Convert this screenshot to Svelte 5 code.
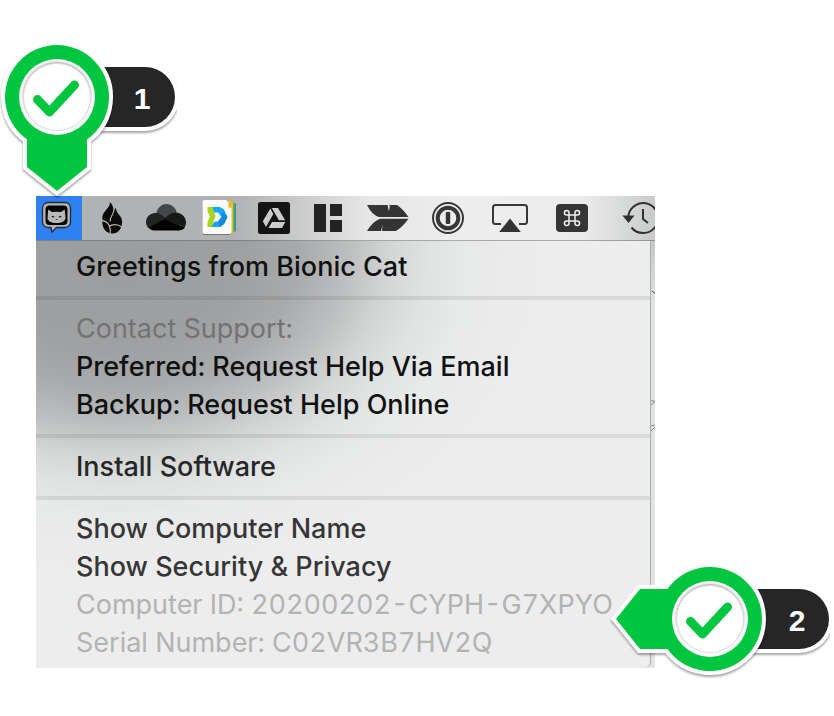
<script>
  let selected = $state('support');

  const groups = [
    [{ label: 'Greetings from Bionic Cat', tone: 'deep' }],
    [
      { label: 'Contact Support:', disabled: true, tone: 'shade' },
      { label: 'Preferred: Request Help Via Email', tone: 'deep' },
      { label: 'Backup: Request Help Online', tone: 'deep' }
    ],
    [{ label: 'Install Software', tone: 'mid' }],
    [
      { label: 'Show Computer Name' },
      { label: 'Show Security & Privacy' },
      { label: 'Computer ID: 20200202-CYPH-G7XPYO', disabled: true },
      { label: 'Serial Number: C02VR3B7HV2Q', disabled: true }
    ]
  ];

  const statusItems = [
    { id: 'support', label: 'Support', width: 46 },
    { id: 'flame', label: 'Backup', width: 32 },
    { id: 'cloud', label: 'Cloud storage', width: 40 },
    { id: 'docs', label: 'Documents', width: 36 },
    { id: 'drive', label: 'Drive', width: 40 },
    { id: 'layout', label: 'Window layout', width: 36 },
    { id: 'feather', label: 'Feather', width: 50 },
    { id: 'password', label: 'Passwords', width: 40 },
    { id: 'airplay', label: 'AirPlay', width: 52 },
    { id: 'command', label: 'Shortcuts', width: 40 },
    { id: 'clock', label: 'Time Machine', width: 52 }
  ];
</script>

{#snippet icon(id)}
  {#if id === 'support'}
    <path d="M12 6.500h17a5.500 5.500 0 0 1 5.500 5.500v14a5.500 5.500 0 0 1-5.500 5.500h-8.500l-4.500 4.500-1-4.500h-3a5.500 5.500 0 0 1-5.500-5.500V12A5.500 5.500 0 0 1 12 6.500z" fill="#b4b4b4" stroke="#252a33" stroke-width="1.300" />
    <rect x="9.500" y="9.500" width="22" height="19.500" rx="4" fill="#060606" />
    <path d="M12.300 13.500l3.700 2.500q4.500-.7 9 0l3.700-2.500.8 8.500c0 3-4 5-9 5s-9-2-9-5z" fill="#b8b8b8" />
    <path d="M15.800 20.300l2.400.7M25.200 20.300l-2.400.7" stroke="#111" stroke-width="1.300" />
    <path d="M19.700 23.500h1.600" stroke="#333" stroke-width="1" />
  {:else if id === 'flame'}
    <path d="M11.800 6c1 5.500-7.500 9.500-7.500 15.500 0 2 .9 2.900.9 3.700-.4-.2-.9-.2-1-.2 0 7.500 3.900 12.500 10.100 12.500 6 0 9.500-5 9.800-11.300.2-6.700-5.500-7.500-6.300-14.200-1 .7-1.700 1.700-2 3C15.300 11.500 14.500 8 11.800 6z" fill="#0a0a0a" />
    <path d="M16 13.500c0 5-4.500 7-3.700 12M3.500 25c5.500-.4 9.300 3.800 8.800 12.500M11.500 30.500c2.500-2.500 8-2.500 12.500.5" fill="none" stroke="#b1b2b3" stroke-width="1.200" />
  {:else if id === 'cloud'}
    <path d="M10 18.500C11 12.300 15 8 20.300 8c5 0 9.200 3.500 10.500 8.500L20 25z" fill="#464748" />
    <path d="M8 17.200c5-.6 7.500 1.600 11.500 4.800L26 26 3 32.500C1 30.800 0 28.700 0 26c0-4.700 3.500-8.300 8-8.800z" fill="#222324" />
    <path d="M18 23.500c4-5 8.500-7.500 13-6.800 5 .5 9 4.600 9 9.500 0 2-.5 3.500-1.500 5z" fill="#171818" />
    <path d="M3 31.700L18 23l21 8.500c-1.500 2-4 2.900-6.500 2.900H8c-2 0-3.900-.7-5-2.700z" fill="#020202" />
  {:else if id === 'docs'}
    <path d="M28 7h4.500q1.500 0 1.500 1.500V34q0 1.500-1.500 1.500H28z" fill="#2b91b4" />
    <path d="M27 6h3.500q2 0 2 2v27q0 1.500-2 1.500H27z" fill="#63b548" />
    <path d="M25 5h4q2 0 2 2v29q0 1.500-2 1.500h-4z" fill="#f5b72c" />
    <path d="M1 38.500h27l1-1" stroke="#77787a" fill="none" />
    <path d="M2 4h22l2.500 2.500V12l3-.5V36q0 2-2 2H3q-2.300 0-2.300-2V5q0-1 1.300-1z" fill="#fcfcfc" />
    <path d="M10 11h8l4 2.500 3.500 7.500-3.500 7-4 3H8.500l4-5.500H16l3.500-4.500-3.500-4.500h-4z" fill="#16a9ee" />
    <path d="M20 16l5.500 5-3.500 7-4 3-2-5.500 3.500-4.500z" fill="#1689e2" />
    <path d="M5.500 11H10l3.500 9L9.500 31H5.500V26l2.500-5.500-2.500-5z" fill="#a6d51b" />
  {:else if id === 'drive'}
    <rect x="4" y="6" width="32" height="32" rx="2.500" fill="#141414" />
    <path d="M16.300 12.500l3 5.500-7.300 13-3.200-5.700zM17.800 12h6.200l7.200 12.200h-6.300zM18 26h13.300l-3.300 6H14.500z" fill="#cbcbcb" />
  {:else if id === 'layout'}
    <path d="M4 8h12v28H4zM20 8h12v12H20zM20 24h12v12H20z" fill="#232323" />
  {:else if id === 'feather'}
    <path d="M5 9h20.500l1.500 6.500.8-5L27.300 9H35q6 4 11.500 12H17Q10 19 5 9zM5 35h14l1.500-6-.5 6h14q7-4.500 12.500-12.300H18Q11 25 5 35z" fill="#343434" />
  {:else if id === 'password'}
    <circle cx="20" cy="22" r="15" fill="none" stroke="#373737" stroke-width="2" />
    <circle cx="20" cy="22" r="10.300" fill="none" stroke="#373737" stroke-width="4" />
    <rect x="17.800" y="16" width="4.400" height="12" rx="1" fill="#333" />
  {:else if id === 'airplay'}
    <path d="M17 28h-5.500q-2.500 0-2.500-2.500v-14Q9 9 11.500 9h29Q43 9 43 11.500v14q0 2.500-2.500 2.500H35" fill="none" stroke="#373737" stroke-width="2" />
    <path d="M26 22.500L36.800 36H15.200z" fill="#343434" />
  {:else if id === 'command'}
    <rect x="4" y="8" width="32" height="28" rx="4" fill="#353535" />
    <path d="M17 19h6v6h-6zM17 19v-2.300a2.300 2.300 0 1 0-2.300 2.300zM23 19h2.300a2.300 2.300 0 1 0-2.300-2.300zM23 25v2.300a2.300 2.300 0 1 0 2.300-2.300zM17 25h-2.300a2.300 2.300 0 1 0 2.300 2.300z" fill="none" stroke="#f0f0f0" stroke-width="1.500" />
  {:else}
    <path d="M20.300 20A15 15 0 1 1 23.500 31.500" fill="none" stroke="#303030" stroke-width="2" />
    <path d="M14.500 19.500h12l-6 7.500z" fill="#303030" />
    <path d="M35 13v10l5 4" fill="none" stroke="#303030" stroke-width="2" />
  {/if}
{/snippet}

{#snippet marker(number, angle, pillEnd, numberX)}
  <svg width="240" height="240" viewBox="-120 -120 240 240" role="img" aria-label="Step {number}">
    <path class="pill" d="M20-30H{pillEnd - 30}a30 30 0 0 1 0 60H20z" />
    <text x={numberX} y="12">{number}</text>
    <g class="pin">
      <path d="M-30 42.500A52 52 0 1 1 30 42.500V70L0 94-30 70z" transform="rotate({angle})" />
    </g>
    <circle r="38" fill="#fff" />
    <circle class="disc" r="33.500" />
    <path class="tick" d="M-19.500 2.500L-7.500 15 17.500-12" />
  </svg>
{/snippet}

<main>
  <div class="screen">
    <nav class="menubar" aria-label="Menu bar">
      {#each statusItems as item}
        <button
          class="status"
          class:active={selected === item.id}
          aria-label={item.label}
          onclick={() => (selected = item.id)}
        >
          <svg width={item.width} height="44" viewBox="0 0 {item.width} 44" aria-hidden="true">
            {@render icon(item.id)}
          </svg>
        </button>
      {/each}
    </nav>

    <div class="desktop">
      <div class="menu" role="menu">
        {#each groups as group, i}
          {#if i > 0}
            <div class="separator" role="separator"></div>
          {/if}
          {#each group as item}
            <button class="item {item.tone ?? ''}" role="menuitem" disabled={item.disabled}>
              {item.label}
            </button>
          {/each}
        {/each}
      </div>
      <svg class="sketch" width="4" height="200" viewBox="0 0 4 200" aria-hidden="true">
        <path d="M1 50l3 2.500" stroke="#444" />
        <path d="M0 160h4M0 164l4-3M0 185l4-1M0 190l4-4" stroke="#8d8587" />
      </svg>
    </div>
  </div>

  <div class="marker first">{@render marker(1, 0, 118, 85)}</div>
  <div class="marker second">{@render marker(2, 90, 119, 87)}</div>
</main>

<style>
  :global(body) {
    background: #fff;
  }

  main {
    position: relative;
    overflow: hidden;
    padding: 196px 179px 48px 36px;
    font-family: Inter, 'Liberation Sans', sans-serif;
  }

  .menubar {
    display: flex;
    gap: 16px;
    overflow: hidden;
    background: linear-gradient(90deg, #b1b2b3 0, #b1b2b3 200px, #c8c9c9 260px, #e6e6e6 330px, #ededed 420px, #ececec 88%, #c9cbcb 100%);
    border-bottom: 1px solid rgba(0, 0, 0, 0.28);
  }

  .status {
    flex: none;
    padding: 0;
    border: 0;
    background: none;
  }

  .status svg {
    display: block;
  }

  .active {
    background: #2f80f0;
  }

  .desktop {
    display: flex;
    background: linear-gradient(#c4c8c8, #dfe2e2 60px, #e3e5e5);
  }

  .menu {
    flex: 1;
    min-width: 0;
    padding: 7px 0 6px;
    border-right: 1px solid #a9adad;
    border-bottom-right-radius: 6px;
    background: radial-gradient(ellipse 400px 300px at 80px 10px, #9c9d9e 0, #9fa0a1 33%, #a9aaab 46%, #bdbebf 58%, #d3d4d4 68%, #e0e1e1 78%, #e8e9e9 88%, #ededed 110%);
  }

  .item {
    display: block;
    width: 100%;
    height: 38px;
    padding: 0 0 0 40px;
    border: 0;
    background: none;
    color: #363636;
    font-family: inherit;
    font-size: 27px;
    font-weight: 450;
    line-height: 38px;
    text-align: left;
    white-space: nowrap;
    font-variant-numeric: tabular-nums;
  }

  .deep {
    color: #101111;
  }

  .mid {
    color: #262728;
  }

  .item:disabled {
    color: #b2b3b3;
    font-weight: 400;
  }

  .item.shade:disabled {
    color: #727374;
  }

  .separator {
    height: 4px;
    margin: 10px 0;
    background: rgba(0, 0, 0, 0.08);
  }

  .sketch {
    flex: none;
    fill: none;
  }

  .marker {
    position: absolute;
    width: 240px;
    height: 240px;
    pointer-events: none;
  }

  .marker svg {
    display: block;
  }

  .first {
    top: -23px;
    left: -63px;
  }

  .second {
    top: 499px;
    right: 4px;
  }

  .pill,
  .pin path {
    stroke: #fff;
    stroke-width: 8px;
    paint-order: stroke;
  }

  .pill {
    fill: #262626;
    filter: drop-shadow(0 2px 1px rgba(0, 0, 0, 0.35));
  }

  .pin {
    fill: #00c63f;
    filter: drop-shadow(0 2px 1px rgba(0, 0, 0, 0.35));
  }

  .disc {
    fill: #fff;
    stroke: #dedede;
    filter: drop-shadow(0 -1px 1px rgba(0, 0, 0, 0.35));
  }

  .tick {
    fill: none;
    stroke: #00c63f;
    stroke-width: 9px;
    stroke-linecap: round;
    stroke-linejoin: round;
  }

  .marker text {
    fill: #fff;
    font-family: 'Liberation Sans', sans-serif;
    font-size: 30px;
    font-weight: 700;
    text-anchor: middle;
  }
</style>
